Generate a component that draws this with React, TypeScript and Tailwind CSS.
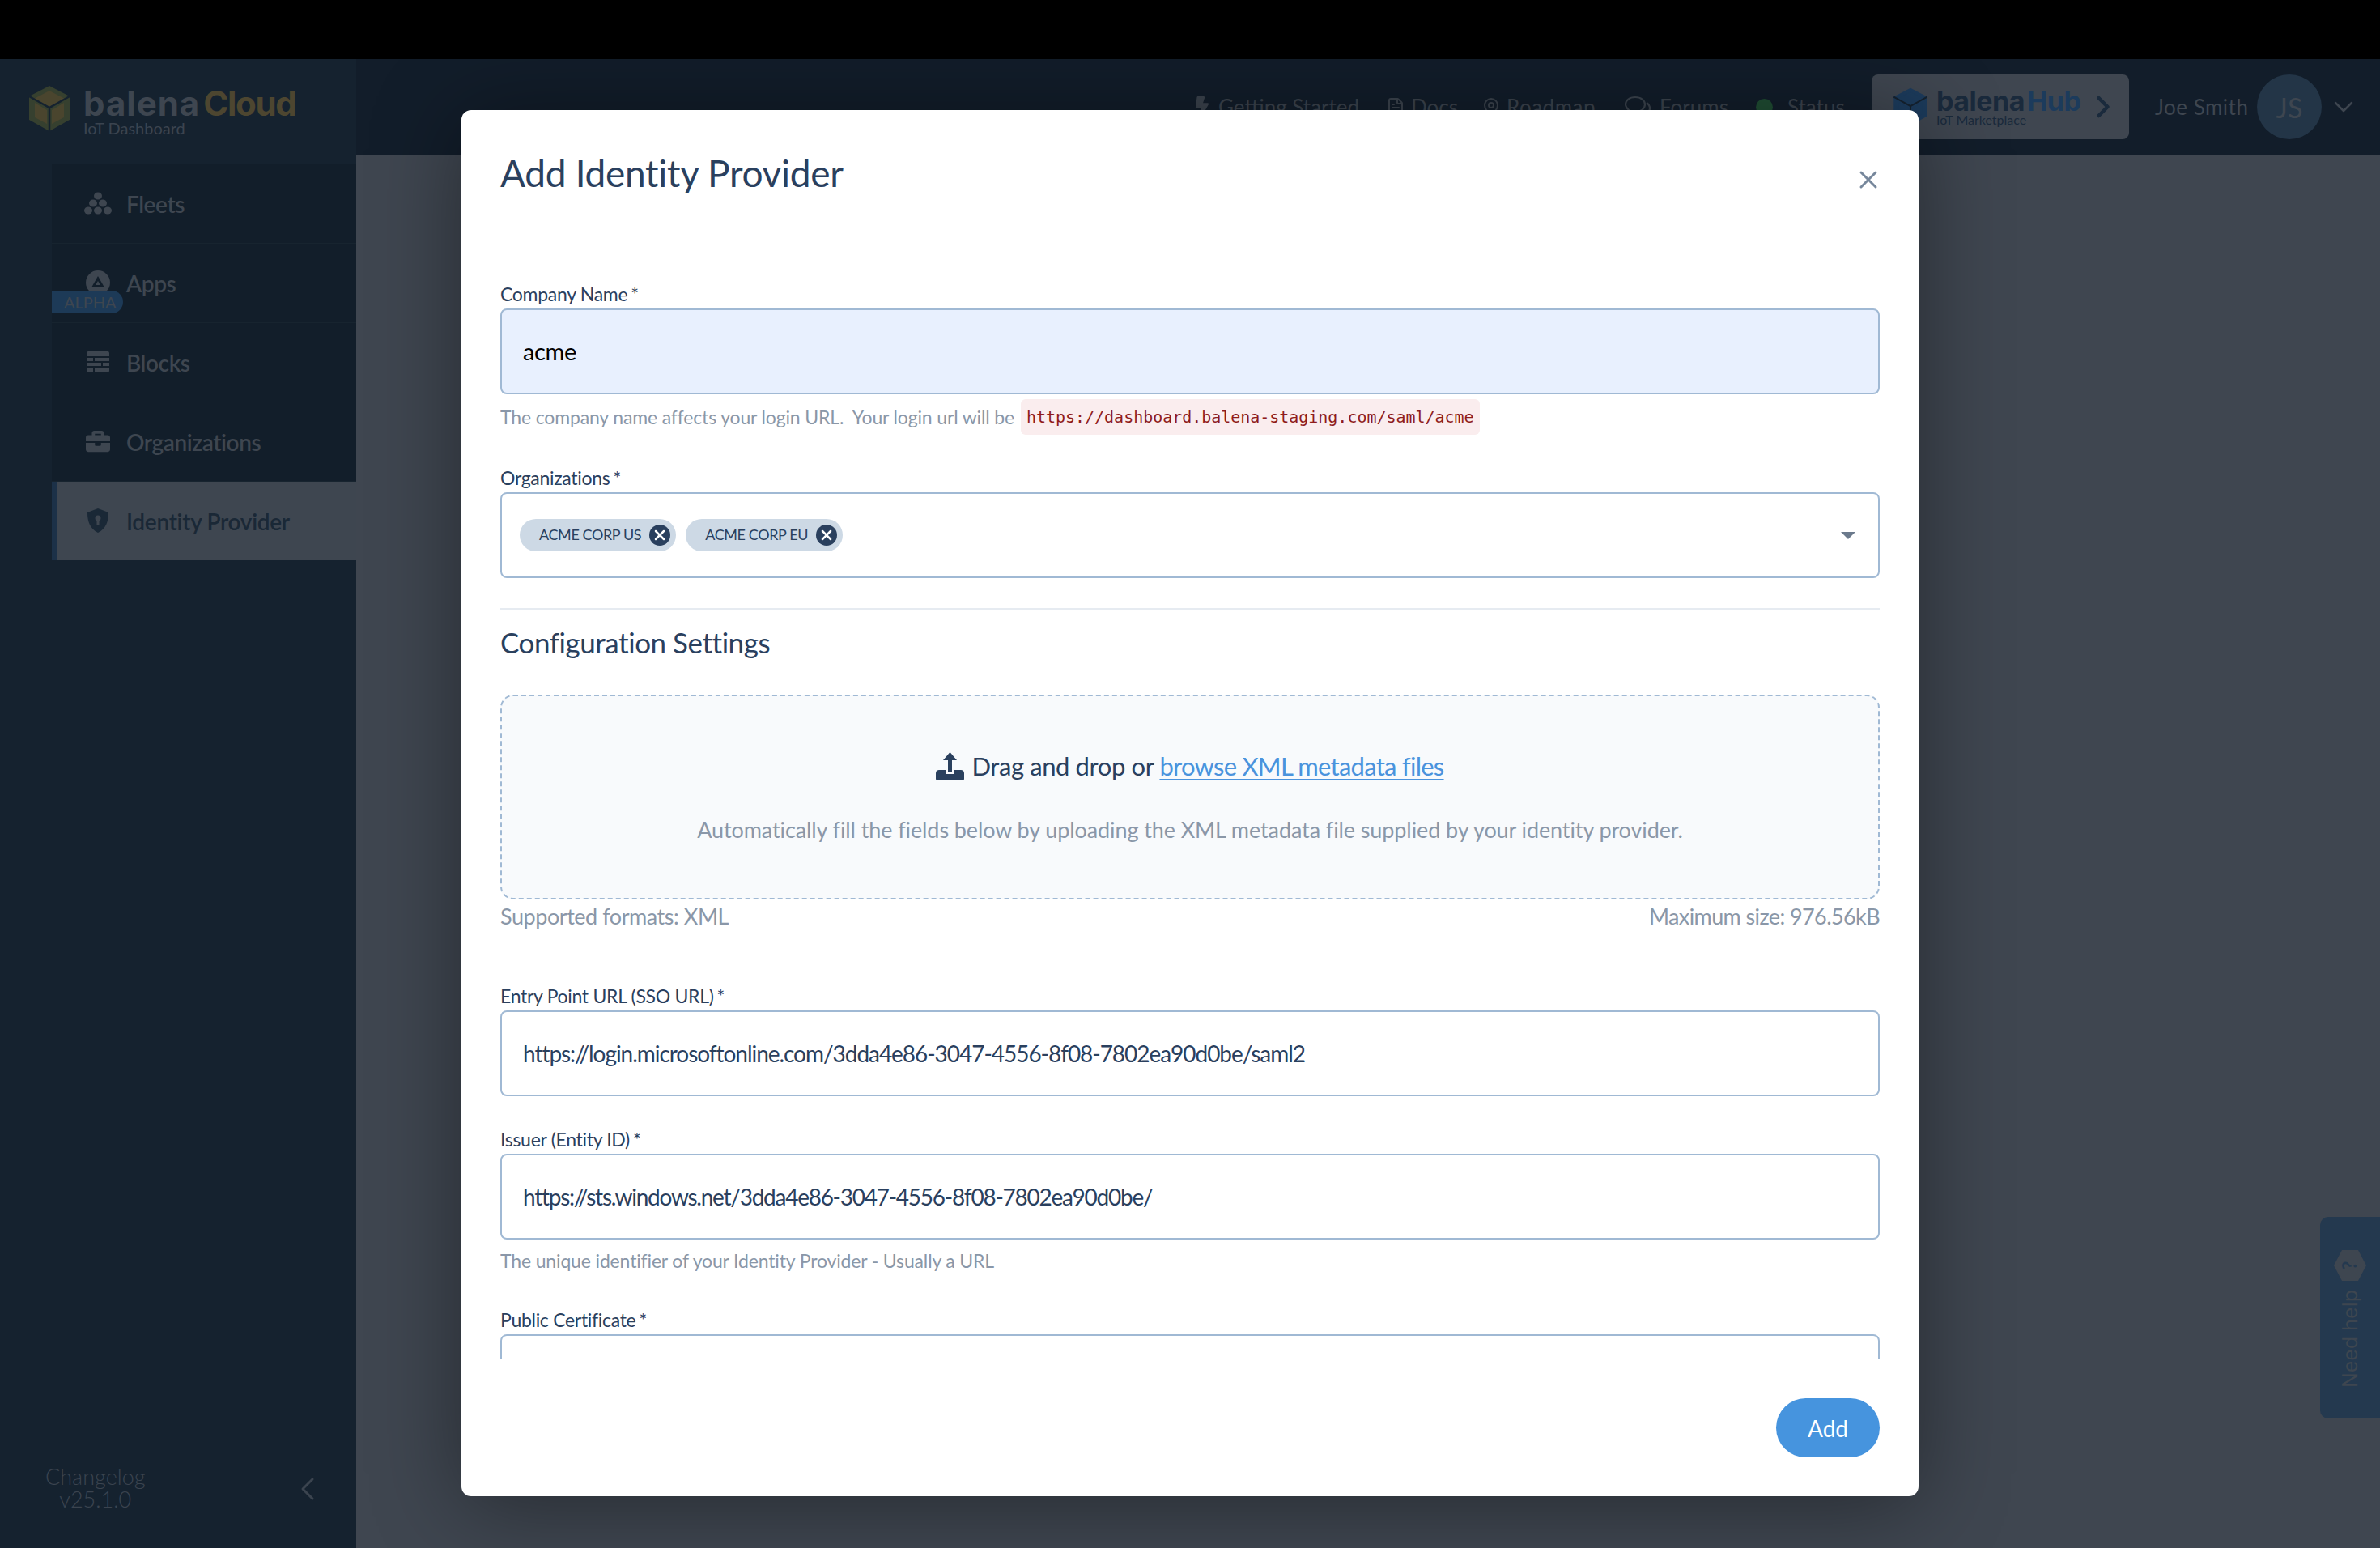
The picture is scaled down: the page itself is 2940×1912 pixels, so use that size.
import React from 'react';
import { FaBolt, FaBriefcase } from 'react-icons/fa';
import { FileText, MapPin, ChevronRight, ChevronLeft, ChevronDown, X } from 'lucide-react';

function CubeLogo({ className, side, top }: { className: string; side: string; top: string }) {
  return (
    <svg viewBox="0 0 52 58" className={className}>
      <path d="M26 1 L51 14 L51 43 L26 57 L1 43 L1 14 Z" fill={side} />
      <path d="M26 7 L45 17 L26 27 L7 17 Z" fill={top} />
      <path d="M1 14 L26 28 L51 14 M26 28 V57" fill="none" stroke="#15222f" strokeWidth="2.5" />
      <path d="M8 22 L23 31 V48 L8 40 Z M44 22 L29 31 V48 L44 40 Z" fill={top} />
    </svg>
  );
}

function FleetsIcon() {
  return (
    <svg viewBox="0 0 34 28" className="w-[34px] h-[28px]" fill="#3e4650">
      <ellipse cx="17" cy="5" rx="5" ry="4.5" />
      <ellipse cx="11" cy="14" rx="5" ry="4.5" />
      <ellipse cx="23" cy="14" rx="5" ry="4.5" />
      <ellipse cx="5" cy="23" rx="5" ry="4.5" />
      <ellipse cx="17" cy="23" rx="5" ry="4.5" />
      <ellipse cx="29" cy="23" rx="5" ry="4.5" />
    </svg>
  );
}

function BlocksIcon() {
  return (
    <svg viewBox="0 0 28 26" className="w-[28px] h-[26px]" fill="#3e4650">
      <path d="M2 0h24a2 2 0 0 1 2 2v4H0V2a2 2 0 0 1 2-2zM0 8h8v4H0zM10 8h18v4H10zM0 14h18v4H0zM20 14h8v4h-8zM0 20h8v6H2a2 2 0 0 1-2-2zM10 20h18v4a2 2 0 0 1-2 2H10z" />
    </svg>
  );
}

function AppsIcon() {
  return (
    <svg viewBox="0 0 30 30" className="w-[30px] h-[30px]">
      <circle cx="15" cy="15" r="15" fill="#3e4650" />
      <path d="M15 7 L23 21 H7 Z M15 13 L12 18 H18 Z" fill="#121e2a" fillRule="evenodd" />
    </svg>
  );
}

function ShieldIcon() {
  return (
    <svg viewBox="0 0 28 30" className="w-[28px] h-[30px]">
      <path d="M14 0 L27 5 C27 16 24 25 14 30 C4 25 1 16 1 5 Z" fill="#1a2836" />
      <circle cx="14" cy="12" r="3.5" fill="#3e4650" />
      <rect x="12.5" y="13" width="3" height="7" fill="#3e4650" />
    </svg>
  );
}

function UploadIcon() {
  return (
    <svg viewBox="0 0 35 35" className="w-[35px] h-[35px]" fill="#2a405e">
      <path d="M17.5 0 L26 10 H20 V25 H15 V10 H9 Z" />
      <path d="M0 26 C0 23 2 22 4 22 H12 V27 H23 V22 H31 C33 22 35 23 35 26 V33 C35 34 34 35 33 35 H2 C1 35 0 34 0 33 Z" />
    </svg>
  );
}

function ForumsIcon() {
  return (
    <svg viewBox="0 0 34 28" className="w-[34px] h-[28px]" fill="none" stroke="#3b434d" strokeWidth="2.2">
      <path d="M14 2 C7 2 2 6 2 11 C2 14 4 16 6 18 L4 22 L10 20 C11 20 13 20.5 14 20.5 C21 20.5 26 16 26 11 C26 6 21 2 14 2 Z" />
      <path d="M28 9 C31 11 32 13 32 16 C32 18 31 20 29 21 L31 26 L25 23 C23 23.5 21 23.5 19 23" />
    </svg>
  );
}

const navItems = [
  { label: 'Fleets', icon: <FleetsIcon /> },
  { label: 'Apps', icon: <AppsIcon />, alpha: true },
  { label: 'Blocks', icon: <BlocksIcon /> },
  { label: 'Organizations', icon: <FaBriefcase className="w-[30px] h-[30px] text-[#3e4650]" /> },
];

function Label({ children }: { children: React.ReactNode }) {
  return (
    <div className="h-[36px] leading-[36px] text-[23px] text-[#2a405e] tracking-[-0.3px]">
      {children}
      <span className="ml-[4px]">*</span>
    </div>
  );
}

function TextField({ value, className }: { value: string; className?: string }) {
  return (
    <input
      readOnly
      value={value}
      className={`w-full h-[106px] px-[26px] bg-white border-2 border-[#a0b9d4] rounded-[8px] text-[28px] text-[#2a405e] outline-none ${className ?? ''}`}
    />
  );
}

function Chip({ label }: { label: string }) {
  return (
    <div className="h-[40px] flex items-center pl-[24px] pr-[7px] gap-[10px] rounded-full bg-[#cdd9e5] text-[18px] text-[#2a405e] tracking-[-0.4px]">
      <span className="-mt-[2px]">{label}</span>
      <span className="w-[26px] h-[26px] rounded-full bg-[#2a405e] flex items-center justify-center">
        <X className="w-[20px] h-[20px] text-white" strokeWidth={3} />
      </span>
    </div>
  );
}

export default function App() {
  return (
    <div className="relative w-[2940px] h-[1912px] overflow-hidden flex flex-col bg-black font-['Lato',sans-serif]">
      <div className="h-[73px] shrink-0 bg-black" />

      <div className="flex-1 flex min-h-0">
        {/* Sidebar */}
        <aside className="w-[440px] shrink-0 bg-[#15222f] flex flex-col">
          <div className="h-[119px] shrink-0 flex items-center pl-[34px] pt-[14px] gap-[15px]">
            <CubeLogo className="w-[54px] h-[58px] -mt-[12px]" side="#36402f" top="#4a452e" />
            <div className="flex flex-col">
              <div className="h-[40px] leading-[40px] text-[42px] font-bold font-['Inter',sans-serif] tracking-[1px] text-[#3e4650]">
                balena<span className="ml-[4px] tracking-[-1.3px] text-[#4d4630]">Cloud</span>
              </div>
              <div className="h-[24px] leading-[20px] text-[20px] text-[#3b444f]">IoT Dashboard</div>
            </div>
          </div>
          <nav className="pl-[64px] pt-[11px] flex flex-col">
            {navItems.map(item => (
              <div key={item.label} className="relative h-[98px] flex items-center bg-[#121e2a] border-b border-[#17242f]">
                <div className="w-[92px] pl-[36px] pr-[14px] flex items-center justify-center -mt-[2px]">{item.icon}</div>
                <span className="text-[28px] font-semibold tracking-[-0.4px] text-[#3e4650]">{item.label}</span>
                {item.alpha && (
                  <span className="absolute left-0 top-[58px] w-[88px] h-[28px] leading-[28px] pl-[15px] rounded-r-full bg-[#1d3a57] text-[20px] text-[#3e4650]">
                    ALPHA
                  </span>
                )}
              </div>
            ))}
            <div className="h-[97px] flex items-center bg-[#3e4650] border-l-[6px] border-[#1c3148]">
              <div className="w-[86px] pl-[30px] pr-[14px] flex items-center justify-center -mt-[2px]">
                <ShieldIcon />
              </div>
              <span className="text-[28px] font-semibold tracking-[-0.3px] text-[#1a2836]">Identity Provider</span>
            </div>
          </nav>
          <div className="mt-auto pb-[46px] pl-[56px] flex items-center">
            <div className="text-center text-[27px] leading-[28px] font-light text-[#3b444f]">
              Changelog
              <br />
              v25.1.0
            </div>
            <ChevronLeft className="w-[48px] h-[48px] ml-[177px] mt-[2px] text-[#3b444f]" strokeWidth={1.5} />
          </div>
        </aside>

        {/* Main */}
        <div className="flex-1 flex flex-col min-w-0">
          <header className="h-[119px] shrink-0 bg-[#121d2a] flex items-start pt-[19px] pl-[1034px] text-[26px] text-[#3b434d]">
            <div className="h-[80px] flex items-center">
              <FaBolt className="w-[22px] h-[26px] mr-[9px] text-[#3b434d]" />
              <span className="w-[175px] mr-[32px]">Getting Started</span>
              <FileText className="w-[24px] h-[28px] mr-[7px]" />
              <span className="w-[56px] mr-[31px]">Docs</span>
              <MapPin className="w-[24px] h-[28px] mr-[7px]" />
              <span className="w-[111px] mr-[34px] tracking-[0.5px]">Roadmap</span>
              <ForumsIcon />
              <span className="w-[87px] ml-[10px] mr-[32px]">Forums</span>
              <span className="w-[21px] h-[21px] rounded-full bg-[#1f4d33] mr-[18px]" />
              <span className="w-[72px]">Status</span>
            </div>
            <div className="ml-[32px] w-[318px] h-[80px] rounded-[8px] bg-[#3f4650] flex items-center pl-[26px]">
              <CubeLogo className="w-[44px] h-[48px] mr-[10px]" side="#1c3b5c" top="#1c3b5c" />
              <div className="flex flex-col w-[180px]">
                <div className="h-[34px] leading-[34px] text-[34px] font-bold font-['Inter',sans-serif] tracking-[-0.5px] text-[#1a2a3c]">
                  balena<span className="ml-[3px] text-[#1c3b5c]">Hub</span>
                </div>
                <div className="h-[18px] -mt-[3px] leading-[18px] text-[16px] text-[#1a2a3c]">IoT Marketplace</div>
              </div>
              <ChevronRight className="w-[44px] h-[44px] ml-[4px] text-[#1a2a3c]" strokeWidth={2.5} />
            </div>
            <div className="ml-[32px] h-[80px] flex items-center text-[#3e4650]">
              <span className="w-[126px] tracking-[0.5px]">Joe Smith</span>
              <span className="w-[80px] h-[80px] rounded-full bg-[#233547] flex items-center justify-center text-[34px] text-[#3e4650]">JS</span>
              <ChevronDown className="w-[40px] h-[40px] ml-[7px]" strokeWidth={1.5} />
            </div>
          </header>
          <main className="flex-1 bg-[#3f4650]" />
        </div>
      </div>

      {/* Need help tab */}
      <div className="absolute right-0 top-[1503px] w-[74px] h-[249px] rounded-l-[10px] bg-[#24394f] flex flex-col items-center pt-[41px] gap-[11px]">
        <svg viewBox="0 0 40 38" className="w-[40px] h-[38px]">
          <path d="M10 0 H30 L40 19 L30 38 H10 L0 19 Z" fill="#3e4650" />
          <text x="20" y="27" textAnchor="middle" fontSize="24" fontWeight="700" fill="#24394f" transform="rotate(-90 20 19)">?</text>
        </svg>
        <span className="[writing-mode:vertical-rl] rotate-180 text-[25px] leading-[30px] font-['Inter',sans-serif] text-[#3e4650]">Need help</span>
      </div>

      {/* Modal */}
      <div className="absolute left-[570px] top-[136px] w-[1800px] h-[1712px] bg-white rounded-[12px] shadow-[0_10px_110px_rgba(0,0,0,0.4)] flex flex-col px-[48px]">
        <div className="pt-[52px] pb-[105px] flex items-start justify-between shrink-0">
          <h1 className="h-[52px] leading-[52px] text-[46px] text-[#2a405e] tracking-[-0.3px]">Add Identity Provider</h1>
          <X className="w-[36px] h-[36px] mt-[16px] mr-[-4px] text-[#76879b]" strokeWidth={2} />
        </div>

        <div className="h-[1334px] shrink-0 overflow-hidden">
          <Label>Company Name</Label>
          <input
            readOnly
            value="acme"
            className="w-full h-[106px] px-[26px] pb-[2px] bg-[#e8f0fe] border-2 border-[#a0b9d4] rounded-[8px] text-[29px] text-black tracking-[-0.4px] outline-none"
          />
          <div className="mt-[6px] h-[44px] flex items-center text-[23px] text-[#8a97a8] tracking-[-0.15px]">
            <span className="whitespace-pre">The company name affects your login URL.  Your login url will be</span>
            <code className="ml-[8px] h-[44px] leading-[44px] px-[7px] rounded-[6px] bg-[#faedee] font-['DejaVu_Sans_Mono',monospace] text-[20px] tracking-[-0.03px] text-[#8f1c1c]">
              https://dashboard.balena-staging.com/saml/acme
            </code>
          </div>

          <div className="mt-[35px]">
            <Label>Organizations</Label>
          </div>
          <div className="h-[106px] flex items-center pl-[22px] pr-[28px] gap-[12px] border-2 border-[#a0b9d4] rounded-[8px]">
            <Chip label="ACME CORP US" />
            <Chip label="ACME CORP EU" />
            <span className="ml-auto w-0 h-0 border-x-[9px] border-x-transparent border-t-[9px] border-t-[#6b7a8c]" />
          </div>

          <div className="mt-[37px] h-[2px] bg-[#e6ebf1]" />
          <h2 className="mt-[16px] h-[48px] leading-[48px] text-[35px] text-[#2a405e] tracking-[-0.45px]">Configuration Settings</h2>

          <div className="mt-[41px] h-[253px] flex flex-col items-center bg-[#f8fafc] border-2 border-dashed border-[#a0b9d4] rounded-[16px] pt-[68px]">
            <div className="h-[36px] flex items-center text-[31px] text-[#2a405e] tracking-[-0.4px]">
              <UploadIcon />
              <span className="ml-[9px] whitespace-pre">Drag and drop or </span>
              <span className="text-[#4a93dd] tracking-[-0.75px] underline decoration-2 underline-offset-[4px]">browse XML metadata files</span>
            </div>
            <div className="mt-[43px] h-[36px] leading-[36px] text-[27px] text-[#8a97a8] tracking-[-0.1px]">
              Automatically fill the fields below by uploading the XML metadata file supplied by your identity provider.
            </div>
          </div>
          <div className="mt-[3px] h-[36px] leading-[36px] flex justify-between text-[27px] text-[#8a97a8]">
            <span className="tracking-[-0.45px]">Supported formats: XML</span>
            <span className="tracking-[-0.6px]">Maximum size: 976.56kB</span>
          </div>

          <div className="mt-[62px]">
            <Label>Entry Point URL (SSO URL)</Label>
          </div>
          <TextField value="https://login.microsoftonline.com/3dda4e86-3047-4556-8f08-7802ea90d0be/saml2" className="tracking-[-1.04px]" />

          <div className="mt-[35px]">
            <Label>Issuer (Entity ID)</Label>
          </div>
          <TextField value="https://sts.windows.net/3dda4e86-3047-4556-8f08-7802ea90d0be/" className="tracking-[-1.26px]" />
          <div className="mt-[8px] h-[36px] leading-[36px] text-[23px] text-[#8a97a8] tracking-[-0.15px]">
            The unique identifier of your Identity Provider - Usually a URL
          </div>

          <div className="mt-[37px]">
            <Label>Public Certificate</Label>
          </div>
          <TextField value="" />
        </div>

        <div className="pt-[48px] flex justify-end">
          <button className="w-[128px] h-[73px] rounded-full bg-[#4694de] text-[28px] text-white">Add</button>
        </div>
      </div>
    </div>
  );
}
